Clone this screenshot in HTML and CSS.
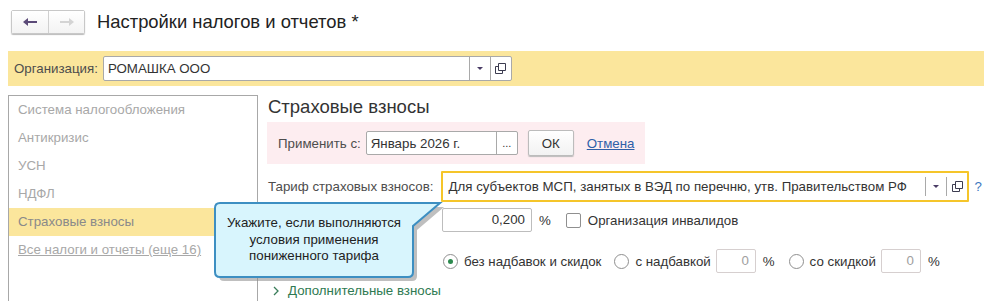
FILE: index.html
```html
<!DOCTYPE html>
<html lang="ru">
<head>
    <meta charset="UTF-8">
    <title>Настройки налогов и отчетов</title>
    <link rel="stylesheet" href="styles.css">
</head>
<body>

    <header class="topbar">
        <div class="nav-buttons">
            <button class="nav-btn">
                <svg width="16" height="10" viewBox="0 0 16 10"><path d="M1 5 L6 1 V4 H15 V6 H6 V9 Z" fill="#5b4a78"/></svg>
            </button>
            <button class="nav-btn">
                <svg width="16" height="10" viewBox="0 0 16 10"><path d="M15 5 L10 1 V4 H1 V6 H10 V9 Z" fill="#d4d4d4"/></svg>
            </button>
        </div>
        <h1 class="title">Настройки налогов и отчетов *</h1>
    </header>

    <div class="org-bar">
        <span class="label">Организация:</span>
        <div class="field org-field">
            <span class="field-text">РОМАШКА ООО</span>
            <span class="field-btn"><span class="caret"></span></span>
            <span class="field-btn">
                <svg width="11" height="11" viewBox="0 0 11 11"><path d="M3.5 0.5 H10.5 V7.5 H3.5 Z M0.5 3.5 H3.5 M0.5 3.5 V10.5 H7.5 V7.5" fill="none" stroke="#3c3c50" stroke-width="1"/></svg>
            </span>
        </div>
    </div>

    <div class="main">
        <nav class="sections">
            <div class="section-item">Система налогообложения</div>
            <div class="section-item">Антикризис</div>
            <div class="section-item">УСН</div>
            <div class="section-item">НДФЛ</div>
            <div class="section-item active">Страховые взносы</div>
            <div class="section-item"><a href="#" class="all-link">Все налоги и отчеты (еще 16)</a></div>
        </nav>

        <section class="content">
            <h2 class="heading">Страховые взносы</h2>

            <div class="apply-box">
                <span class="label">Применить с:</span>
                <div class="field date-field">
                    <span class="field-text">Январь 2026 г.</span>
                    <span class="field-btn dots">...</span>
                </div>
                <button class="ok-btn">ОК</button>
                <a href="#" class="cancel-link">Отмена</a>
            </div>

            <div class="tariff-row">
                <span class="label">Тариф страховых взносов:</span>
                <div class="field tariff-field">
                    <span class="field-text">Для субъектов МСП, занятых в ВЭД по перечню, утв. Правительством РФ</span>
                    <span class="field-btn"><span class="caret"></span></span>
                    <span class="field-btn">
                        <svg width="11" height="11" viewBox="0 0 11 11"><path d="M3.5 0.5 H10.5 V7.5 H3.5 Z M0.5 3.5 H3.5 M0.5 3.5 V10.5 H7.5 V7.5" fill="none" stroke="#3c3c50" stroke-width="1"/></svg>
                    </span>
                </div>
                <span class="help">?</span>
            </div>

            <div class="rate-row">
                <div class="num-input rate-input">0,200</div>
                <span class="pct">%</span>
                <span class="checkbox"></span>
                <span class="text">Организация инвалидов</span>
            </div>

            <div class="radio-row">
                <span class="radio checked"></span>
                <span class="text">без надбавок и скидок</span>
                <span class="radio"></span>
                <span class="text">с надбавкой</span>
                <div class="num-input small-input">0</div>
                <span class="pct">%</span>
                <span class="radio"></span>
                <span class="text">со скидкой</span>
                <div class="num-input small-input">0</div>
                <span class="pct">%</span>
            </div>

            <div class="extra-row">
                <svg width="8" height="10" viewBox="0 0 8 10"><path d="M2 1 L6 5 L2 9" fill="none" stroke="#3a7d5a" stroke-width="1.3"/></svg>
                <span class="extra-text">Дополнительные взносы</span>
            </div>
        </section>
    </div>

    <div class="tooltip">
        <svg class="tooltip-shape" width="240" height="92" viewBox="0 0 240 92">
            <path d="M14 9 H234 L207 32 V78 Q207 83 202 83 H14 Q9 83 9 78 V14 Q9 9 14 9 Z" fill="#8a8a8a" opacity="0.55"/>
            <path d="M10 5 H230 L203 28 V74 Q203 79 198 79 H10 Q5 79 5 74 V10 Q5 5 10 5 Z" fill="#d8f5fd" stroke="#3d8fc2" stroke-width="2"/>
        </svg>
        <div class="tooltip-text">Укажите, если выполняются<br>условия применения<br>пониженного тарифа</div>
    </div>

</body>
</html>
```

FILE: styles.css
```css
body {
    font-family: 'Liberation Sans', Arial, sans-serif;
    font-size: 13.3px;
    color: #333;
    margin: 0;
    padding: 0;
    width: 984px;
    height: 301px;
    overflow: hidden;
    position: relative;
    background: #fff;
}

.topbar {
    display: flex;
    align-items: center;
    height: 51px;
    padding-left: 11px;
    box-sizing: border-box;
    padding-bottom: 8px;
}

.nav-buttons {
    display: flex;
    border: 1px solid #c8c8c8;
    border-radius: 2px;
    box-shadow: 0 1px 1px #bbb;
    height: 22px;
}

.nav-btn {
    width: 36px;
    height: 22px;
    border: none;
    background: linear-gradient(#fff, #f3f3f3);
    padding: 0;
    display: flex;
    align-items: center;
    justify-content: center;
}

.nav-btn + .nav-btn {
    border-left: 1px solid #d0d0d0;
}

.title {
    font-size: 18.4px;
    font-weight: normal;
    color: #222;
    margin: 0 0 0 12px;
}

.org-bar {
    display: flex;
    align-items: center;
    margin-left: 8px;
    height: 35px;
    background-color: #fbe69c;
    padding-left: 6px;
}

.label {
    color: #4d4d4d;
    white-space: nowrap;
}

.field {
    display: flex;
    align-items: stretch;
    border: 1px solid #a9a9a9;
    border-radius: 2px;
    background: #fff;
    box-sizing: border-box;
}

.field-text {
    flex: 1;
    display: flex;
    align-items: center;
    padding-left: 4px;
    color: #333;
    white-space: nowrap;
    overflow: hidden;
}

.field-btn {
    width: 20px;
    border-left: 1px solid #a9a9a9;
    display: flex;
    align-items: center;
    justify-content: center;
}

.caret {
    width: 0;
    height: 0;
    border-left: 3px solid transparent;
    border-right: 3px solid transparent;
    border-top: 3px solid #4a3c66;
}

.org-field {
    margin-left: 5px;
    width: 409px;
    height: 25px;
}

.main {
    display: flex;
    margin-top: 9px;
}

.sections {
    width: 250px;
    height: 220px;
    margin-left: 8px;
    border: 1px solid #a8a8a8;
    box-sizing: border-box;
    flex-shrink: 0;
}

.section-item {
    height: 28px;
    line-height: 28px;
    padding-left: 9px;
    color: #a8a8a8;
}

.section-item.active {
    background-color: #fbe69c;
    color: #8a8a8a;
}

.all-link {
    color: #a8a8a8;
}

.content {
    padding-left: 10px;
    flex: 1;
}

.heading {
    font-size: 18.5px;
    font-weight: normal;
    color: #333;
    margin: 1px 0 0 0;
    height: 26px;
}

.apply-box {
    display: flex;
    align-items: center;
    width: 378px;
    height: 42px;
    margin-left: -1px;
    background-color: #fdedf0;
    padding-left: 11px;
    box-sizing: border-box;
}

.date-field {
    margin-left: 5px;
    width: 152px;
    height: 24px;
}

.dots {
    width: 21px;
    align-items: flex-end;
    padding-bottom: 5px;
    box-sizing: border-box;
    font-size: 11px;
}

.ok-btn {
    margin-left: 10px;
    width: 46px;
    height: 26px;
    border: 1px solid #bcbcbc;
    border-radius: 2px;
    background: linear-gradient(#fff, #f2f2f2);
    box-shadow: 0 1px 1px #bbb;
    font-family: 'Liberation Sans', Arial, sans-serif;
    font-size: 13.3px;
    color: #333;
    padding: 0;
}

.cancel-link {
    margin-left: 13px;
    color: #2f5fa8;
}

.tariff-row {
    display: flex;
    align-items: center;
    margin-top: 7px;
}

.tariff-field {
    margin-left: 8px;
    width: 528px;
    height: 31px;
    border: 2px solid #f5c52a;
    border-radius: 1px;
}

.tariff-field .field-text {
    padding-left: 5px;
}

.tariff-field .field-btn {
    margin: 4px 0;
}

.help {
    margin-left: 5px;
    color: #3c78c0;
}

.rate-row,
.radio-row {
    display: flex;
    align-items: center;
    margin-left: 174px;
}

.rate-row {
    margin-top: 6px;
}

.num-input {
    border: 1px solid #bdbdbd;
    border-radius: 2px;
    box-sizing: border-box;
    text-align: right;
    padding-right: 6px;
    height: 24px;
    line-height: 22px;
}

.rate-input {
    width: 90px;
    color: #333;
}

.small-input {
    width: 40px;
    color: #a0a0a0;
    border-color: #d6cfcf;
}

.pct {
    margin-left: 7px;
    color: #333;
}

.checkbox {
    width: 13px;
    height: 13px;
    border: 1px solid #8f8f8f;
    border-radius: 2px;
    margin-left: 15px;
    margin-right: 7px;
}

.text {
    color: #333;
}

.radio-row {
    margin-top: 17px;
    margin-left: 175px;
}

.radio {
    width: 13px;
    height: 13px;
    border: 1px solid #8f8f8f;
    border-radius: 50%;
    margin-right: 6px;
    display: flex;
    align-items: center;
    justify-content: center;
}

.radio.checked::after {
    content: '';
    width: 5px;
    height: 5px;
    border-radius: 50%;
    background: #2c8a4e;
}

.radio-row .text + .radio {
    margin-left: 13px;
}

.radio-row .text + .num-input {
    margin-left: 5px;
}

.radio-row .pct + .radio {
    margin-left: 14px;
}

.extra-row {
    display: flex;
    align-items: center;
    margin-top: 10px;
    margin-left: 4px;
}

.extra-text {
    margin-left: 8px;
    color: #2e7a52;
}

.tooltip {
    position: absolute;
    left: 210px;
    top: 198px;
    width: 240px;
    height: 92px;
}

.tooltip-shape {
    position: absolute;
    left: 0;
    top: 0;
}

.tooltip-text {
    position: absolute;
    left: 5px;
    top: 17px;
    width: 198px;
    text-align: center;
    line-height: 16.5px;
    color: #222;
}
```
